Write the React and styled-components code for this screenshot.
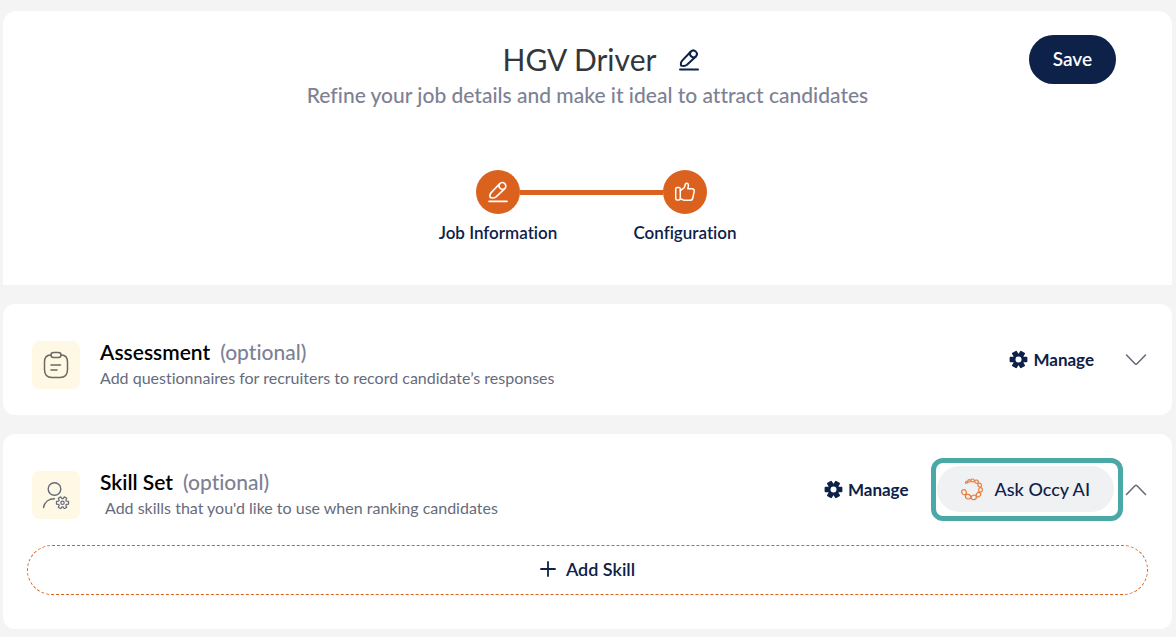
import { useState } from 'react';
import styled, { createGlobalStyle, ThemeProvider } from 'styled-components';

const theme = {
  page: '#f4f4f4',
  card: '#ffffff',
  navy: '#0d2149',
  orange: '#db611e',
  teal: '#4aa9a6',
  cream: '#fff8e5',
  pill: '#f0f1f3',
  heading: '#33363b',
  muted: '#7d8194',
  text: '#666b7c',
};

const GlobalStyle = createGlobalStyle`
  * {
    box-sizing: border-box;
  }
  body {
    margin: 0;
    background-color: ${theme.page};
    font-family: Lato, 'Open Sans', sans-serif;
    font-variant-ligatures: none;
    color: ${theme.navy};
  }
  h1, h2, p, ol {
    margin: 0;
    padding: 0;
  }
  button {
    font-family: inherit;
    color: inherit;
    border: 0;
    padding: 0;
    background: none;
    cursor: pointer;
  }
  svg {
    display: block;
    flex: none;
  }
`;

const Page = styled.main`
  display: flex;
  flex-direction: column;
  gap: 19px;
  padding: 11px 4px 8px 3px;
`;

const Header = styled.header`
  background-color: ${({ theme }) => theme.card};
  border-radius: 14px 14px 0 0;
  padding: 24px 56px 41px;
`;

const TitleRow = styled.div`
  display: grid;
  grid-template-columns: 1fr auto 1fr;
  align-items: center;
`;

const TitleGroup = styled.div`
  grid-column: 2;
  display: flex;
  align-items: center;
  gap: 22px;
  padding-left: 28px;
`;

const Title = styled.h1`
  font-size: 30px;
  line-height: 40px;
  padding-bottom: 2px;
  font-weight: 400;
  color: ${({ theme }) => theme.heading};
`;

const SaveButton = styled.button`
  justify-self: end;
  height: 49px;
  padding: 0 24px 2px;
  border-radius: 25px;
  background-color: ${({ theme }) => theme.navy};
  color: #fff;
  font-size: 19px;
  font-weight: 600;
`;

const Subtitle = styled.p`
  font-size: 21px;
  line-height: 22px;
  font-weight: 500;
  text-align: center;
  color: ${({ theme }) => theme.muted};
`;

const Steps = styled.ol`
  display: flex;
  justify-content: center;
  list-style: none;
  margin-top: 64px;
  padding-left: 8px;
`;

const Step = styled.li`
  width: 187px;
  text-align: center;
`;

const StepTrack = styled.div`
  display: flex;
  align-items: center;
`;

const StepLine = styled.span`
  flex: 1;
  height: 5px;
  background-color: ${({ theme, $on }) => ($on ? theme.orange : 'transparent')};
`;

const StepCircle = styled.span`
  display: flex;
  align-items: center;
  justify-content: center;
  width: 44px;
  height: 44px;
  border-radius: 50%;
  background-color: ${({ theme }) => theme.orange};
  color: #fff;
`;

const StepLabel = styled.span`
  display: block;
  margin-top: 8px;
  font-size: 17px;
  line-height: 22px;
  font-weight: 600;
`;

const Card = styled.section`
  background-color: ${({ theme }) => theme.card};
  border-radius: 12px;
  padding: 24px;
`;

const CardHead = styled.div`
  display: flex;
  align-items: center;
  padding: 0 1px 0 5px;
  min-height: 63px;
`;

const CardInfo = styled.div`
  flex: 1;
  display: flex;
  align-items: center;
  gap: 20px;
  padding-top: 11px;
`;

const IconTile = styled.span`
  display: flex;
  align-items: center;
  justify-content: center;
  width: 48px;
  height: 48px;
  border-radius: 8px;
  background-color: ${({ theme }) => theme.cream};
  color: ${({ theme }) => theme.text};
`;

const CardTitle = styled.h2`
  font-size: 21px;
  line-height: 26px;
  font-weight: 600;
  color: #000;
`;

const Optional = styled.span`
  margin-left: 10px;
  font-weight: 500;
  color: ${({ theme }) => theme.muted};
`;

const CardDesc = styled.p`
  font-size: 16px;
  line-height: 26px;
  padding-left: ${({ $indent }) => ($indent ? '5px' : '0')};
  color: ${({ theme }) => theme.text};
`;

const ManageButton = styled.button`
  display: flex;
  align-items: center;
  gap: 5px;
  margin-right: ${({ $wide }) => ($wide ? '31px' : '22px')};
  font-size: 17px;
  line-height: 24px;
  font-weight: 700;
`;

const Highlight = styled.div`
  padding: 3px 4px 4px 1px;
  border: 5px solid ${({ theme }) => theme.teal};
  border-radius: 12px;
  margin-right: 2px;
`;

const AskButton = styled.button`
  display: flex;
  align-items: center;
  gap: 11px;
  height: 46px;
  padding: 0 24px 0 23px;
  border-radius: 23px;
  background-color: ${({ theme }) => theme.pill};
  font-size: 18px;
  font-weight: 500;
`;

const ToggleButton = styled.button`
  color: ${({ theme }) => theme.text};
`;

const AddSkillButton = styled.button`
  display: flex;
  align-items: center;
  justify-content: center;
  gap: 10px;
  width: 100%;
  height: 50px;
  margin: 24px 0 10px;
  padding-bottom: 2px;
  border: 1px dashed ${({ theme }) => theme.orange};
  border-radius: 25px;
  font-size: 18px;
  font-weight: 600;
`;

function PencilIcon({ stroke = 2 }) {
  return (
    <svg width="22" height="22" viewBox="0 0 22 22" fill="none" stroke="currentColor" strokeWidth={stroke} strokeLinecap="round" strokeLinejoin="round" aria-hidden="true">
      <path d="M3.200 16.600c-.6-1.800-.4-3.500 1-5L12.600 2.800c1.600-1.600 3.800-1.600 5.200-.2s1.400 3.600-.2 5.200L9 15.800c-1.600 1.300-3.500 1.400-5.800.8Z" />
      <path d="M12.600 2.800c-2 3.300 1.500 7 5 5" />
      <path d="M2 20.400h18" />
    </svg>
  );
}

function ThumbIcon() {
  return (
    <svg width="22" height="22" viewBox="0 0 22 22" fill="none" stroke="currentColor" strokeWidth="1.500" strokeLinecap="round" strokeLinejoin="round" aria-hidden="true">
      <rect x="1.700" y="6.500" width="4.600" height="12.500" rx="1.500" />
      <path d="M6.300 9.600 10 6.800c.9-.8 1-2.300 1.300-3.500.4-1.500 3-1.500 3.100.8.1 1.300-.4 2.700-.6 3.700H18c1.700 0 2.500 1.200 2.200 2.600l-1.400 6.600c-.3 1.400-1.200 2.300-2.700 2.300h-5.600c-2 0-2.600-1.300-4.200-1.600" />
    </svg>
  );
}

function ClipboardIcon() {
  return (
    <svg width="26" height="28" viewBox="0 0 26 28" fill="none" stroke="#6c6761" strokeWidth="1.500" strokeLinecap="round" aria-hidden="true">
      <path d="M7.500 4C3.500 4.200 1.500 6.800 1.500 11v7.500c0 5.200 2.300 8 7.500 8h8c5.200 0 7.500-2.800 7.500-8V11c0-4.200-2-6.800-6-7" />
      <rect x="8" y="1.500" width="10" height="5" rx="2.500" />
      <path d="M8 14h9.500M8 19h6" />
    </svg>
  );
}

// closed outline with six teeth, the first one pointing right
function gearOutline(inner, outer) {
  const points = [];
  for (let i = 0; i < 6; i += 1) {
    [[-22, inner], [-13, outer], [13, outer], [22, inner]].forEach(([offset, r]) => {
      const a = ((i * 60 + offset) * Math.PI) / 180;
      points.push(`${(Math.cos(a) * r).toFixed(2)} ${(Math.sin(a) * r).toFixed(2)}`);
    });
  }
  return `M${points.join('L')}Z`;
}

function GearIcon() {
  return (
    <svg width="19" height="19" viewBox="-9.500 -9.500 19 19" aria-hidden="true">
      <path d={gearOutline(5, 8.2)} fill="currentColor" stroke="currentColor" strokeWidth="1.800" strokeLinejoin="round" />
      <circle r="3" fill="#fff" />
    </svg>
  );
}

function UserGearIcon() {
  return (
    <svg width="28" height="28" viewBox="0 0 28 28" fill="none" stroke="currentColor" strokeWidth="1.400" strokeLinecap="round" aria-hidden="true">
      <circle cx="12.500" cy="8" r="6.300" />
      <path d="M1.500 26.500C2.500 21 7 17.700 12.500 17.700" />
      <g transform="translate(20.500 21.800)" strokeWidth="1.200" strokeLinejoin="round">
        <path d={gearOutline(4.2, 6.2)} />
        <circle r="1.700" />
      </g>
    </svg>
  );
}

const links = [
  [-130, 1.2], [-110, 1.5], [-86, 1.9], [-58, 2.100], [-27, 2.300],
  [6, 2.500], [41, 2.700], [78, 2.900], [117, 3], [158, 3],
];

function OccyIcon() {
  return (
    <svg width="24" height="24" viewBox="-12 -12 24 24" fill="none" stroke="#e87f43" strokeWidth="1.200" aria-hidden="true">
      {links.map(([deg, r]) => (
        <ellipse key={deg} rx={r * 0.75} ry={r * 0.9} transform={`rotate(${deg}) translate(8.600 0)`} />
      ))}
    </svg>
  );
}

function ChevronIcon({ open }) {
  return (
    <svg width="22" height="14" viewBox="0 0 22 14" fill="none" stroke="currentColor" strokeWidth="1.600" strokeLinecap="round" strokeLinejoin="round" aria-hidden="true">
      <path d={open ? 'M1.500 11.500 10 2.700q1-1 2 0l8.500 8.800' : 'M1.500 2 10 10.800q1 1 2 0l8.500-8.800'} />
    </svg>
  );
}

function PlusIcon() {
  return (
    <svg width="16" height="16" viewBox="0 0 16 16" fill="none" stroke="currentColor" strokeWidth="1.800" strokeLinecap="round" aria-hidden="true">
      <path d="M8 1v14M1 8h14" />
    </svg>
  );
}

function Manage({ wide }) {
  return (
    <ManageButton type="button" $wide={wide}>
      <GearIcon />
      Manage
    </ManageButton>
  );
}

function App() {
  const [skillsOpen, setSkillsOpen] = useState(true);

  return (
    <ThemeProvider theme={theme}>
      <GlobalStyle />
      <Page>
        <Header>
          <TitleRow>
            <TitleGroup>
              <Title>HGV Driver</Title>
              <button type="button" aria-label="Edit title">
                <PencilIcon />
              </button>
            </TitleGroup>
            <SaveButton type="button">Save</SaveButton>
          </TitleRow>
          <Subtitle>Refine your job details and make it ideal to attract candidates</Subtitle>
          <Steps>
            <Step>
              <StepTrack>
                <StepLine />
                <StepCircle><PencilIcon stroke={1.6} /></StepCircle>
                <StepLine $on />
              </StepTrack>
              <StepLabel>Job Information</StepLabel>
            </Step>
            <Step>
              <StepTrack>
                <StepLine $on />
                <StepCircle><ThumbIcon /></StepCircle>
                <StepLine />
              </StepTrack>
              <StepLabel>Configuration</StepLabel>
            </Step>
          </Steps>
        </Header>

        <Card>
          <CardHead>
            <CardInfo>
              <IconTile><ClipboardIcon /></IconTile>
              <div>
                <CardTitle>Assessment<Optional>(optional)</Optional></CardTitle>
                <CardDesc>Add questionnaires for recruiters to record candidate’s responses</CardDesc>
              </div>
            </CardInfo>
            <Manage wide />
            <ToggleButton type="button" aria-label="Expand assessment">
              <ChevronIcon />
            </ToggleButton>
          </CardHead>
        </Card>

        <Card>
          <CardHead>
            <CardInfo>
              <IconTile><UserGearIcon /></IconTile>
              <div>
                <CardTitle>Skill Set<Optional>(optional)</Optional></CardTitle>
                <CardDesc $indent>Add skills that you'd like to use when ranking candidates</CardDesc>
              </div>
            </CardInfo>
            <Manage />
            <Highlight>
              <AskButton type="button">
                <OccyIcon />
                Ask Occy AI
              </AskButton>
            </Highlight>
            <ToggleButton type="button" aria-label="Toggle skill set" onClick={() => setSkillsOpen(!skillsOpen)}>
              <ChevronIcon open={skillsOpen} />
            </ToggleButton>
          </CardHead>
          {skillsOpen && (
            <AddSkillButton type="button">
              <PlusIcon />
              Add Skill
            </AddSkillButton>
          )}
        </Card>
      </Page>
    </ThemeProvider>
  );
}

export default App;
